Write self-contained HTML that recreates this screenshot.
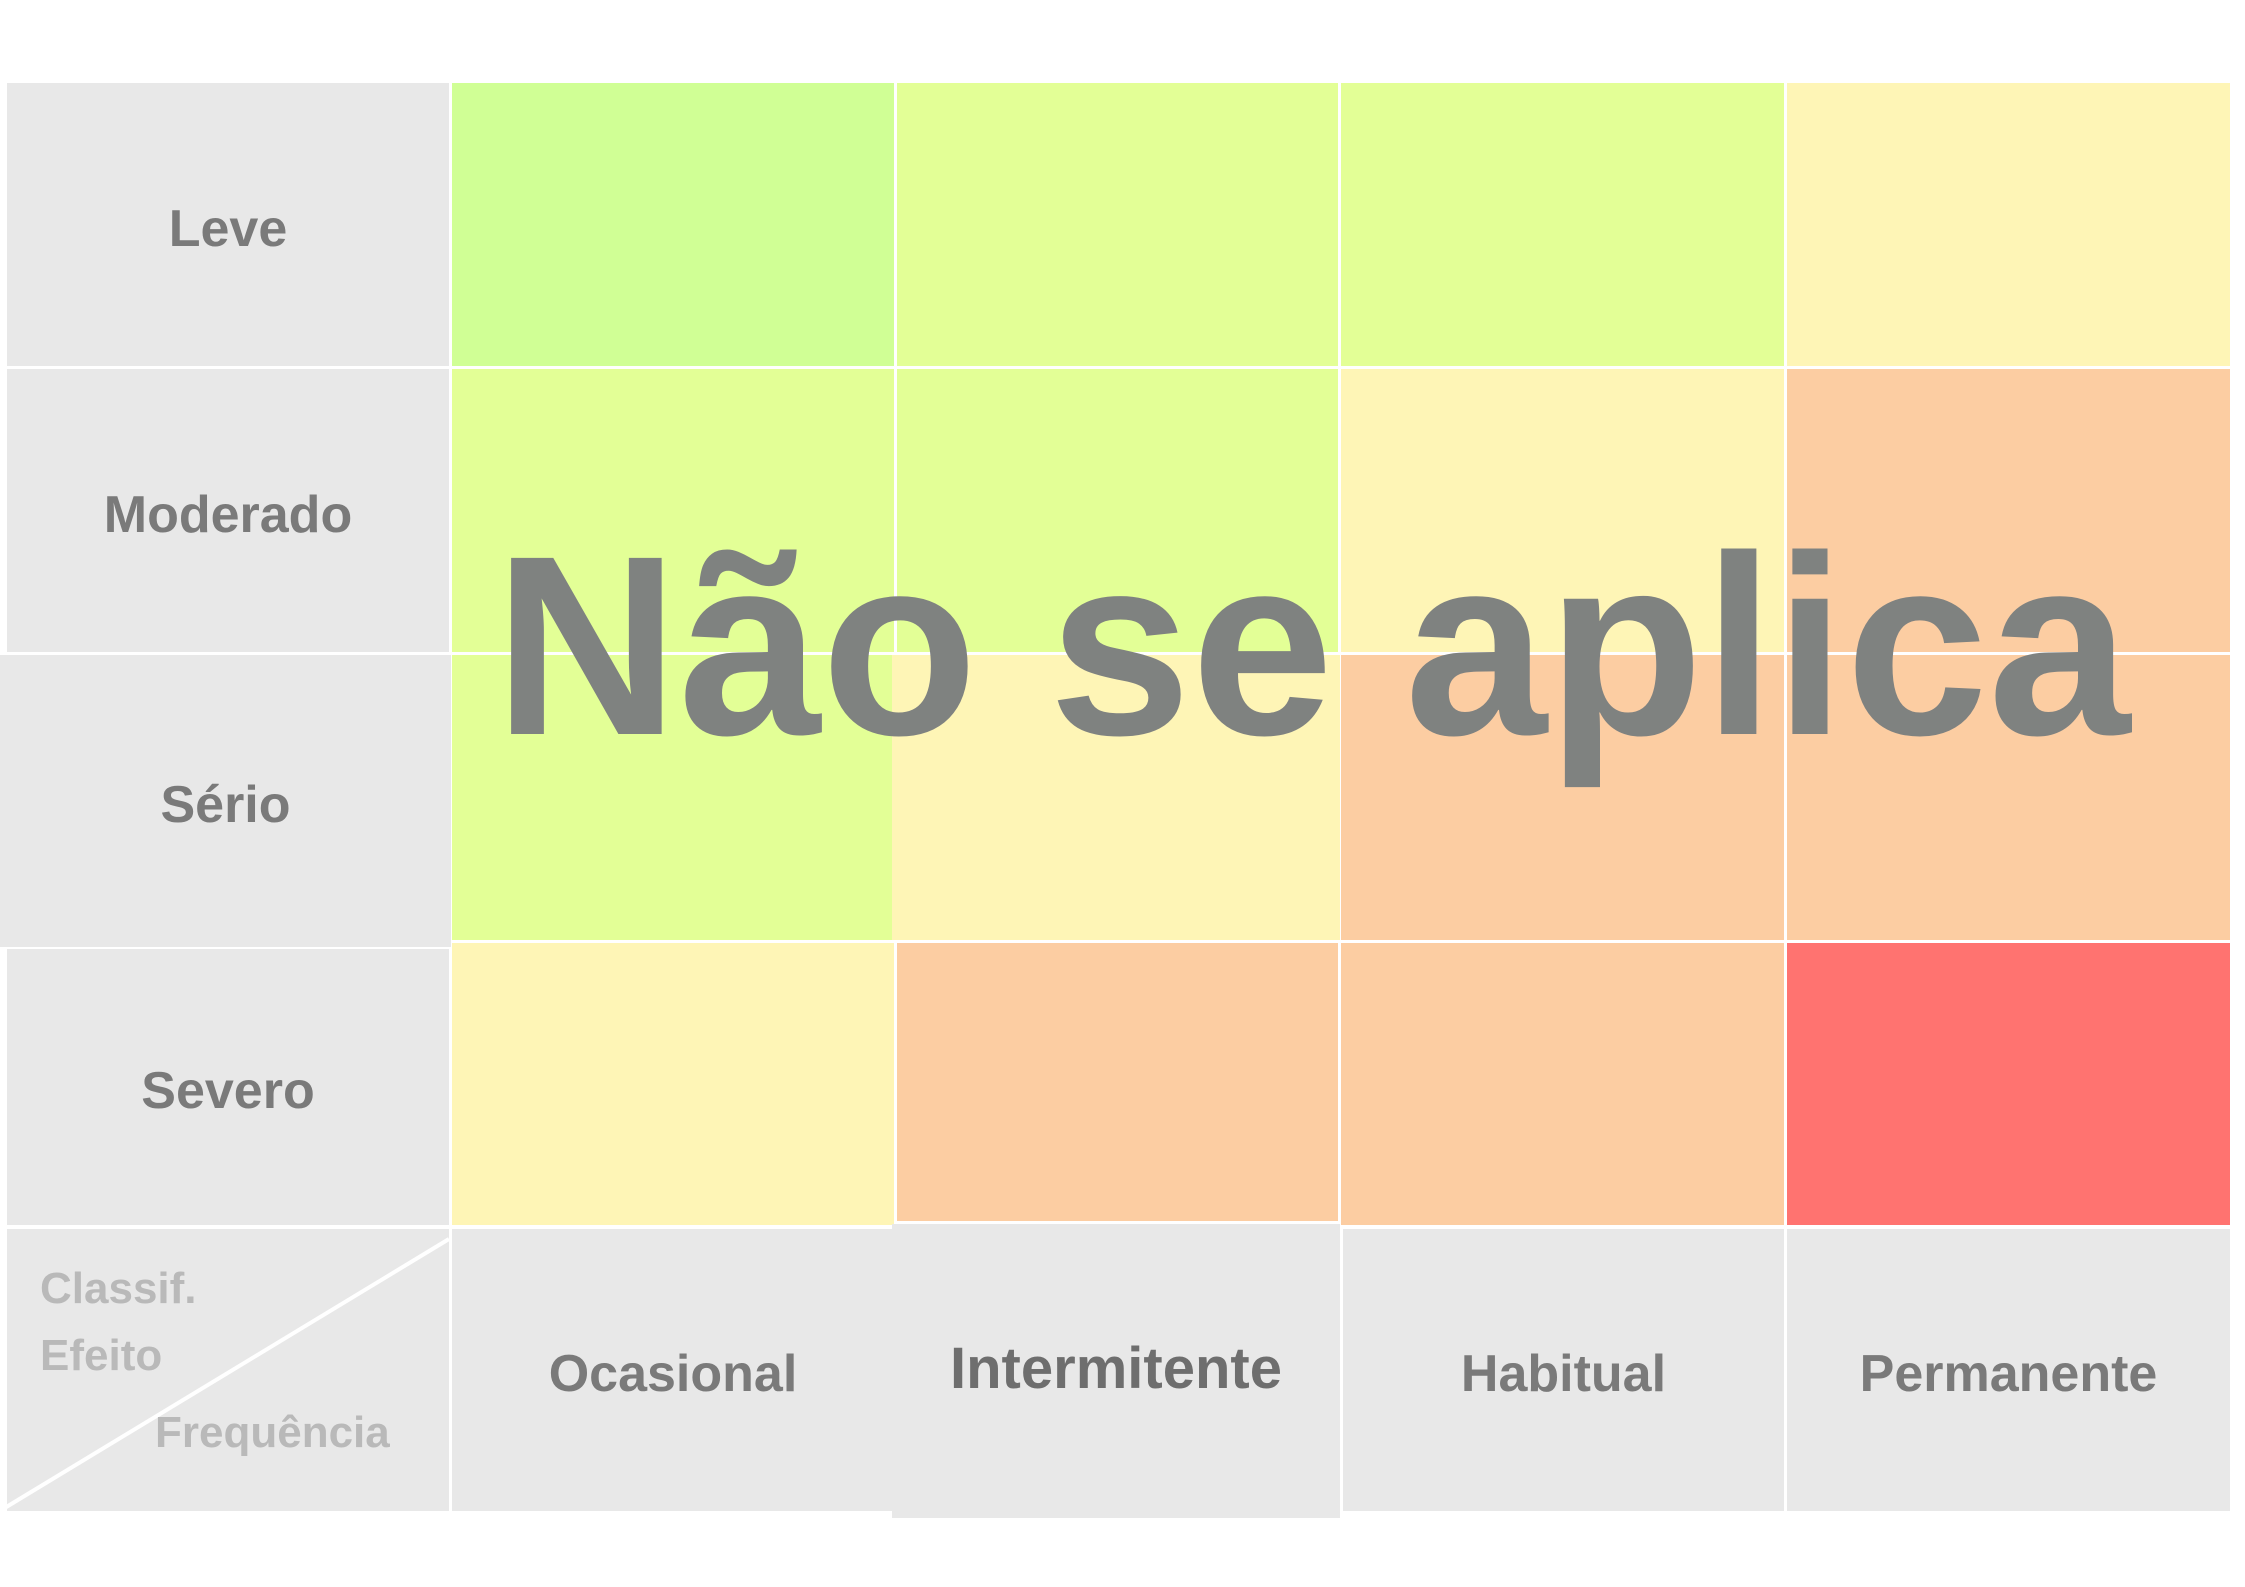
<!DOCTYPE html>
<html><head><meta charset="utf-8"><style>
body{margin:0;width:2245px;height:1587px;background:#fff;position:relative;overflow:hidden;font-family:"Liberation Sans",sans-serif}
.c{position:absolute;display:flex;align-items:center;justify-content:center;font-weight:bold;color:#7a7a7a;font-size:52px;padding-top:8px;box-sizing:border-box}
.g{background:#e8e8e8}
.t{position:absolute;color:#b9b9b9;font-size:44px;font-weight:bold}
</style></head><body>
<!-- row 1 -->
<div class="c g" style="left:7px;top:83px;width:442px;height:283px">Leve</div>
<div class="c" style="left:452px;top:83px;width:442px;height:283px;background:#d0ff95"></div>
<div class="c" style="left:897px;top:83px;width:441px;height:283px;background:#e3ff96"></div>
<div class="c" style="left:1341px;top:83px;width:443px;height:283px;background:#e3ff96"></div>
<div class="c" style="left:1787px;top:83px;width:443px;height:283px;background:#fef5b6"></div>
<!-- row 2 -->
<div class="c g" style="left:7px;top:369px;width:442px;height:283px">Moderado</div>
<div class="c" style="left:452px;top:369px;width:442px;height:283px;background:#e3ff96"></div>
<div class="c" style="left:897px;top:369px;width:441px;height:283px;background:#e3ff96"></div>
<div class="c" style="left:1341px;top:369px;width:443px;height:283px;background:#fef5b6"></div>
<div class="c" style="left:1787px;top:369px;width:443px;height:283px;background:#fccda2"></div>
<!-- row 3 -->
<div class="c g" style="left:0px;top:655px;width:451px;height:292px">Sério</div>
<div class="c" style="left:452px;top:655px;width:440px;height:285px;background:#e3ff96"></div>
<div class="c" style="left:892px;top:655px;width:448px;height:285px;background:#fef5b6"></div>
<div class="c" style="left:1341px;top:655px;width:443px;height:285px;background:#fccda2"></div>
<div class="c" style="left:1787px;top:655px;width:443px;height:285px;background:#fccda2"></div>
<!-- row 4 -->
<div class="c g" style="left:7px;top:949px;width:442px;height:276px">Severo</div>
<div class="c" style="left:452px;top:943px;width:442px;height:282px;background:#fef5b6"></div>
<div class="c" style="left:897px;top:943px;width:441px;height:278px;background:#fccda2"></div>
<div class="c" style="left:1341px;top:943px;width:443px;height:282px;background:#fccda2"></div>
<div class="c" style="left:1787px;top:943px;width:443px;height:282px;background:#ff7370"></div>
<!-- row 5 -->
<div class="g" style="position:absolute;left:7px;top:1229px;width:442px;height:282px"></div>
<svg style="position:absolute;left:0;top:1229px" width="460" height="290"><line x1="449" y1="10" x2="3" y2="280" stroke="#fff" stroke-width="4"/></svg>
<div class="t" style="left:40px;top:1264px">Classif.</div>
<div class="t" style="left:40px;top:1331px">Efeito</div>
<div class="t" style="left:155px;top:1408px">Frequência</div>
<div class="c g" style="left:452px;top:1229px;width:442px;height:282px">Ocasional</div>
<div class="c g" style="left:892px;top:1224px;width:448px;height:294px;padding-bottom:14px;font-size:58px;color:#6e6e6e">Intermitente</div>
<div class="c g" style="left:1343px;top:1229px;width:441px;height:282px">Habitual</div>
<div class="c g" style="left:1787px;top:1229px;width:443px;height:282px">Permanente</div>
<div style="position:absolute;left:494px;top:518px;font-size:256px;letter-spacing:0px;font-weight:bold;color:#7f8280;line-height:1;white-space:nowrap">Não se aplica</div>
</body></html>
